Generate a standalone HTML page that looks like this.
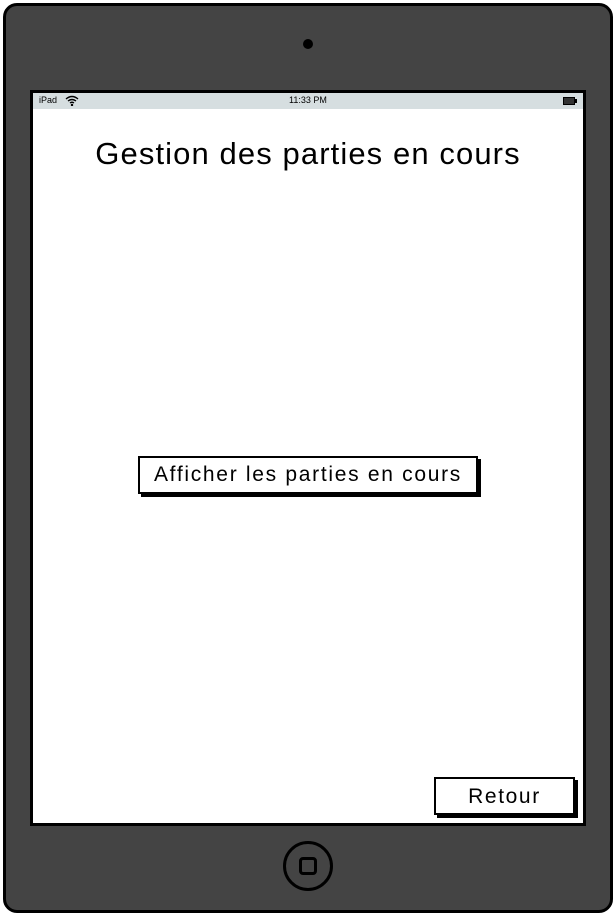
<!DOCTYPE html>
<html><head><meta charset="utf-8"><style>
body{margin:0;width:616px;height:916px;background:#fff;position:relative;overflow:hidden;font-family:"Liberation Sans",sans-serif}
.dev{position:absolute;left:3px;top:3px;width:604px;height:904px;background:#444;border:3px solid #000;border-radius:14px}
.cam{position:absolute;left:303px;top:39px;width:10px;height:10px;border-radius:50%;background:#000}
.scr{position:absolute;left:30px;top:90px;width:550px;height:730px;background:#fff;border:3px solid #000}
.sb{position:absolute;left:0;top:0;width:550px;height:16px;background:#d6dee0;font-size:9px}
.title{position:absolute;left:0;width:550px;top:43px;text-align:center;font-size:31px;letter-spacing:1.1px;color:#000}
.btn{position:absolute;background:#fff;border:2px solid #000;box-shadow:3px 3px 0 #000;text-align:center;font-size:21px;box-sizing:border-box}
.home{position:absolute;left:283px;top:841px;width:44px;height:44px;border:3px solid #000;border-radius:50%}
.home div{position:absolute;left:13px;top:13px;width:12px;height:12px;border:3px solid #000;border-radius:4px}
</style></head><body>
<div class="dev"></div>
<div class="cam"></div>
<div class="scr">
 <div class="sb"><span style="position:absolute;left:6px;top:2px">iPad</span>
 <svg style="position:absolute;left:32px;top:2px" width="14" height="11" viewBox="0 0 14 11"><path d="M1 4 Q7 -1 13 4 M3 6 Q7 3 11 6 M5 8 Q7 6.5 9 8" stroke="#000" stroke-width="1.4" fill="none"/><circle cx="7" cy="10" r="1.2"/></svg>
 <span style="position:absolute;left:256px;top:2px">11:33 PM</span>
 <div style="position:absolute;left:530px;top:4px;width:10px;height:6px;border:1px solid #000;background:#333"></div><div style="position:absolute;left:542px;top:6px;width:2px;height:4px;background:#000"></div></div>
 <div class="title">Gestion des parties en cours</div>
 <div class="btn" style="left:105px;top:363px;width:340px;height:38px;line-height:34px;letter-spacing:1.7px">Afficher les parties en cours</div>
 <div class="btn" style="left:401px;top:684px;width:141px;height:38px;line-height:36px;letter-spacing:1.6px">Retour</div>
</div>
<div class="home"><div></div></div>
</body></html>
